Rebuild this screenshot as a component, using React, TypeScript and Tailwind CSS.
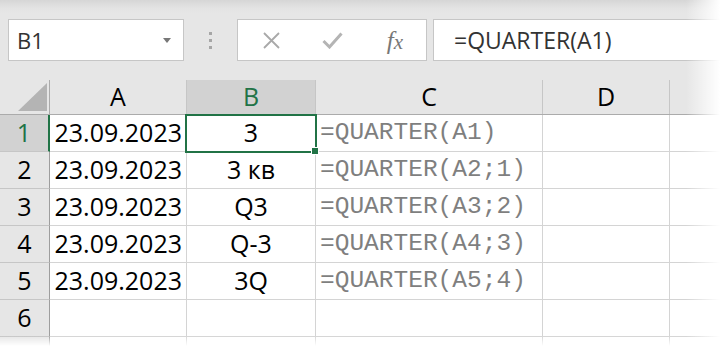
import React from "react";

const cols = [
  { key: "A", w: "w-[137px]" },
  { key: "B", w: "w-[129px]" },
  { key: "C", w: "w-[227px]" },
  { key: "D", w: "w-[127px]" },
];

const rows: { n: string; a: string; b: string; c: string }[] = [
  { n: "1", a: "23.09.2023", b: "3", c: "=QUARTER(A1)" },
  { n: "2", a: "23.09.2023", b: "3 кв", c: "=QUARTER(A2;1)" },
  { n: "3", a: "23.09.2023", b: "Q3", c: "=QUARTER(A3;2)" },
  { n: "4", a: "23.09.2023", b: "Q-3", c: "=QUARTER(A4;3)" },
  { n: "5", a: "23.09.2023", b: "3Q", c: "=QUARTER(A5;4)" },
  { n: "6", a: "", b: "", c: "" },
  { n: "", a: "", b: "", c: "" },
];

const sans = "font-['Open_Sans','Noto_Sans',sans-serif]";

export default function App() {
  return (
    <div
      className={`relative w-[720px] h-[346px] overflow-hidden bg-white text-black ${sans}`}
    >
      {/* formula bar area */}
      <div className="flex items-start h-[80px] pt-[19px] bg-[linear-gradient(to_bottom,#d6d6d6_0px,#e3e3e3_8px,#e6e6e6_14px)]">
        <div className="ml-[8px] w-[176px] h-[42px] shrink-0 bg-white border border-[#c6c6c6] flex items-center pl-[8px] pr-[12px]">
          <span className="text-[22px] text-[#333] leading-none flex-1">B1</span>
          <svg width="8" height="5" viewBox="0 0 8 5" className="mt-[1px]">
            <path d="M0 0h8L4 5z" fill="#777" />
          </svg>
        </div>
        <div className="w-[53px] h-[42px] shrink-0 flex flex-col items-center justify-center gap-[4px]">
          <span className="w-[3px] h-[3px] bg-[#a6a6a6]" />
          <span className="w-[3px] h-[3px] bg-[#a6a6a6]" />
          <span className="w-[3px] h-[3px] bg-[#a6a6a6]" />
        </div>
        <div className="w-[190px] h-[42px] shrink-0 bg-white border border-[#c6c6c6] flex items-center">
          <div className="w-[62px] flex justify-center pl-[5px]">
            <svg width="17" height="17" viewBox="0 0 17 17">
              <path d="M1 1L16 16M16 1L1 16" stroke="#a9a9a9" strokeWidth="1.8" />
            </svg>
          </div>
          <div className="w-[62px] flex justify-center pl-[3px]">
            <svg width="21" height="17" viewBox="0 0 21 17">
              <path d="M1.5 9L7.5 15L19.5 1.5" stroke="#b4b4b4" strokeWidth="3" fill="none" />
            </svg>
          </div>
          <div className="flex-1 flex justify-center pl-[2px]">
            <span className="font-['Liberation_Serif',serif] italic text-[25px] text-[#777] leading-none">
              f<span className="text-[21px]">x</span>
            </span>
          </div>
        </div>
        <div className="ml-[6px] flex-1 h-[42px] bg-white border border-[#c6c6c6] border-r-0 flex items-center pl-[20px]">
          <span className="text-[23px] text-[#333] leading-none">=QUARTER(A1)</span>
        </div>
      </div>

      {/* column headers */}
      <div className="flex h-[35px] bg-[#e6e6e6] border-b border-[#ababab]">
        <div className="relative w-[50px] shrink-0 border-r border-[#ababab]">
          <svg width="30" height="29" viewBox="0 0 30 29" className="absolute left-[18px] top-[3px]">
            <path d="M29 0V28H0z" fill="#b4b4b4" />
          </svg>
        </div>
        {cols.map((c) => (
          <div
            key={c.key}
            className={`${c.w} shrink-0 flex items-center justify-center border-r border-[#c6c6c6] text-[25px] ${
              c.key === "B" ? "bg-[#d2d2d2] text-[#217346]" : ""
            }`}
          >
            {c.key}
          </div>
        ))}
        <div className="flex-1" />
      </div>

      {/* rows */}
      {rows.map((r, i) => (
        <div key={i} className="flex h-[37px]">
          <div
            className={`w-[50px] shrink-0 flex items-center justify-center border-b border-[#c6c6c6] text-[25px] ${
              i === 0
                ? "bg-[#d2d2d2] text-[#217346] border-r-2 border-r-[#217346]"
                : "bg-[#e6e6e6] border-r border-r-[#9e9e9e]"
            }`}
          >
            {r.n}
          </div>
          <div className="w-[137px] shrink-0 flex items-center justify-end pr-[4px] border-r border-b border-[#d4d4d4] text-[25px]">
            {r.a}
          </div>
          <div className="w-[129px] shrink-0 flex items-center justify-center border-r border-b border-[#d4d4d4] text-[25px]">
            {r.b}
          </div>
          <div className="w-[227px] shrink-0 flex items-center pl-[4px] border-r border-b border-[#d4d4d4] font-['Liberation_Mono',monospace] text-[24.5px] text-[#7f7f7f]">
            {r.c}
          </div>
          <div className="w-[127px] shrink-0 border-r border-b border-[#d4d4d4]" />
          <div className="flex-1 border-b border-[#d4d4d4]" />
        </div>
      ))}

      {/* selection B1 */}
      <div className="absolute left-[185px] top-[114px] w-[132px] h-[39px] border-2 border-[#217346]" />
      <div className="absolute left-[311px] top-[147px] w-[8px] h-[8px] bg-[#217346] border border-white" />

      {/* screenshot shadow fades */}
      <div className="absolute right-0 top-0 h-full w-[34px] bg-gradient-to-r from-transparent to-white" />
      <div className="absolute left-0 bottom-0 w-full h-[10px] bg-gradient-to-b from-transparent to-white" />
    </div>
  );
}
